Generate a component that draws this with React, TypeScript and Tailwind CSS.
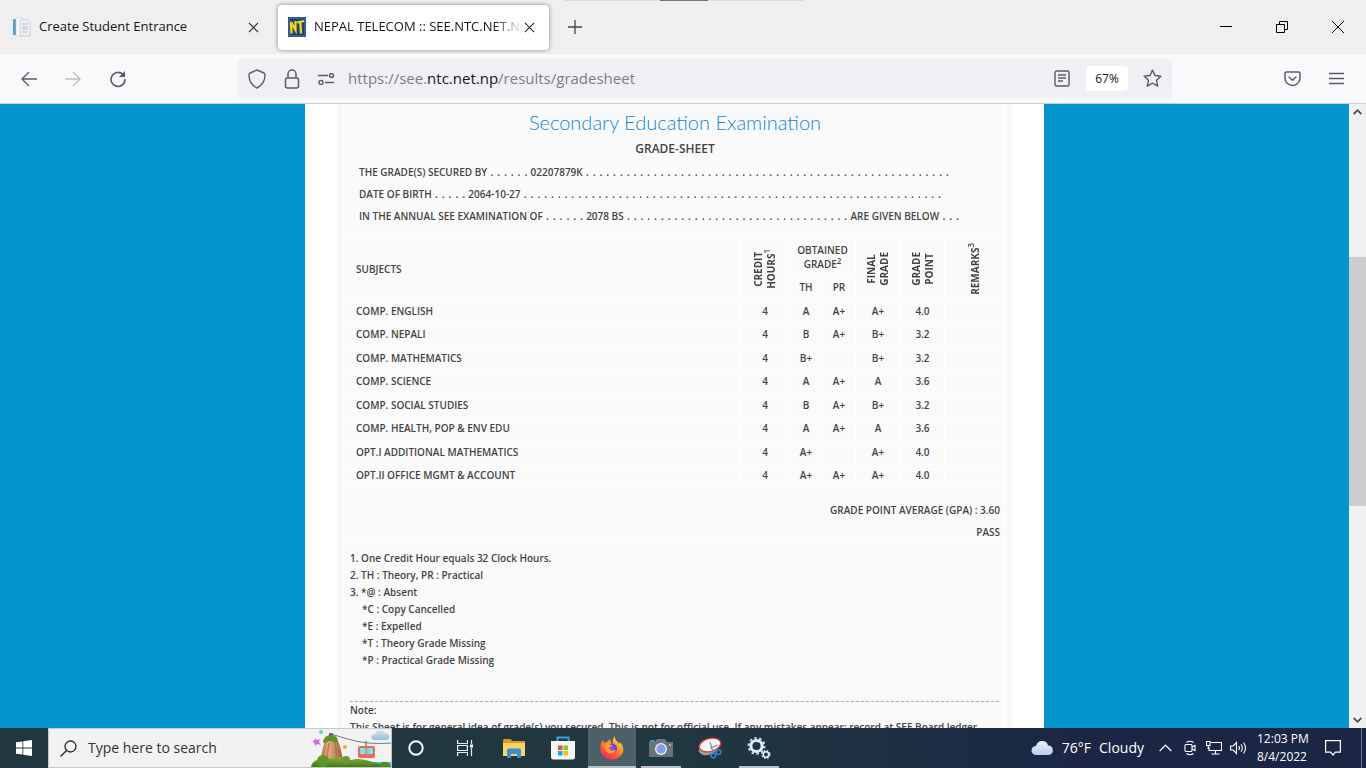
import type { ReactNode } from "react";

type Result = {
  subject: string;
  th: string;
  pr: string;
  final: string;
  point: string;
};

const results: Result[] = [
  { subject: "COMP. ENGLISH", th: "A", pr: "A+", final: "A+", point: "4.0" },
  { subject: "COMP. NEPALI", th: "B", pr: "A+", final: "B+", point: "3.2" },
  { subject: "COMP. MATHEMATICS", th: "B+", pr: "", final: "B+", point: "3.2" },
  { subject: "COMP. SCIENCE", th: "A", pr: "A+", final: "A", point: "3.6" },
  { subject: "COMP. SOCIAL STUDIES", th: "B", pr: "A+", final: "B+", point: "3.2" },
  { subject: "COMP. HEALTH, POP & ENV EDU", th: "A", pr: "A+", final: "A", point: "3.6" },
  { subject: "OPT.I ADDITIONAL MATHEMATICS", th: "A+", pr: "", final: "A+", point: "4.0" },
  { subject: "OPT.II OFFICE MGMT & ACCOUNT", th: "A+", pr: "A+", final: "A+", point: "4.0" },
];

const remarkCodes = [
  "*C : Copy Cancelled",
  "*E : Expelled",
  "*T : Theory Grade Missing",
  "*P : Practical Grade Missing",
];

function Cross({ size }: { size: number }) {
  return (
    <svg width={size} height={size} viewBox="0 0 12 12" fill="none" stroke="#222" strokeWidth="1.1">
      <path d="M1 1l10 10M11 1L1 11" />
    </svg>
  );
}

function TabBar() {
  return (
    <header className="relative flex h-[54px] shrink-0 items-center bg-[#efefef] text-[13px] text-[#15141a]">
      <div className="absolute left-[564px] top-0 h-px w-60 bg-[#dcdcdc]">
        <div className="mx-auto h-px w-12 bg-[#777]" />
      </div>
      <div className="flex h-[45px] w-[278px] items-center pl-[13px] pr-[19px]">
        <svg width="18" height="20" viewBox="0 0 18 20" className="mr-2 shrink-0">
          <path d="M0 2h3v16H0z" fill="#5b9cc9" />
          <path d="M3 1h7v18H3z" fill="#f5f8fa" stroke="#c8d3da" strokeWidth=".6" />
          <path d="M7 3h7l3 3v13H7z" fill="#eef1f2" stroke="#bcc6cb" strokeWidth=".7" />
          <path d="M9 7h6M9 10h6M9 12h6M9 15h5" stroke="#b5bfc4" />
        </svg>
        <span className="flex-1 whitespace-nowrap">Create Student Entrance</span>
        <button aria-label="Close tab">
          <Cross size={11} />
        </button>
      </div>
      <div className="flex h-[45px] w-[271px] items-center rounded-[4px] bg-white pl-[10px] pr-[14px] shadow-[0_0_4px_rgba(0,0,0,0.45)]">
        <svg width="18" height="20" viewBox="0 0 18 20" className="mr-2 shrink-0">
          <path d="M0 0h18v20H0z" fill="#1e4477" />
          <path d="M1 1h16v18H1z" fill="none" stroke="#4a78ad" />
          <path d="M3.500 16.500L3 5l4.500 8L7.500 4" fill="none" stroke="#f9d616" strokeWidth="2.300" />
          <path d="M9 5.500l7-1.500M12.300 5l.7 11.500" fill="none" stroke="#f9d616" strokeWidth="2.300" />
        </svg>
        <span className="min-w-0 flex-1 overflow-hidden whitespace-nowrap mask-r-from-85% mask-r-to-100%">
          NEPAL TELECOM :: SEE.NTC.NET.NP
        </span>
        <button aria-label="Close tab">
          <Cross size={11} />
        </button>
      </div>
      <button aria-label="New tab" className="ml-[19px]">
        <svg width="14" height="14" viewBox="0 0 14 14" stroke="#444" strokeWidth="1.3">
          <path d="M7 0v14M0 7h14" />
        </svg>
      </button>
      <div className="ml-auto flex items-center gap-11 pr-[22px]">
        <button aria-label="Minimize">
          <svg width="12" height="12" viewBox="0 0 12 12" stroke="#000">
            <path d="M0 5.500h12" />
          </svg>
        </button>
        <button aria-label="Restore">
          <svg width="12" height="12" viewBox="0 0 12 12" fill="none" stroke="#000">
            <path d="M.5 3.500h8v8h-8zM3.500 3V.5h8v8H9" />
          </svg>
        </button>
        <button aria-label="Close">
          <svg width="12" height="12" viewBox="0 0 12 12" stroke="#000">
            <path d="M0 0l12 12M12 0L0 12" />
          </svg>
        </button>
      </div>
    </header>
  );
}

function Toolbar() {
  return (
    <nav className="flex h-[50px] shrink-0 items-center border-b border-[#cccccf] bg-[#f9f9fb] text-[#5b5b66]">
      <div className="flex w-[238px] items-center gap-7 pl-[21px]">
        <button aria-label="Back">
          <svg width="16" height="16" viewBox="0 0 16 16" fill="none" stroke="currentColor" strokeWidth="1.4" strokeLinecap="round" strokeLinejoin="round">
            <path d="M7.500 1.500L1 8l6.500 6.500M1 8h14.500" />
          </svg>
        </button>
        <button aria-label="Forward" className="text-[#bdbdc2]">
          <svg width="16" height="16" viewBox="0 0 16 16" fill="none" stroke="currentColor" strokeWidth="1.4" strokeLinecap="round" strokeLinejoin="round">
            <path d="M8.500 1.500L15 8l-6.500 6.500M15 8H.5" />
          </svg>
        </button>
        <button aria-label="Reload">
          <svg width="18" height="18" viewBox="0 0 18 18" fill="none" stroke="currentColor" strokeWidth="1.600" strokeLinecap="round">
            <path d="M14 4.500A7 7 0 1 0 16 9.500" />
            <path d="M16 1v6h-6z" fill="currentColor" stroke="none" />
          </svg>
        </button>
      </div>
      <div className="flex h-[39px] flex-1 items-center rounded-[4px] bg-[#f0f0f4] px-[10px]">
        <svg width="18" height="20" viewBox="0 0 18 20" fill="none" stroke="currentColor" strokeWidth="1.400" strokeLinejoin="round">
          <path d="M9 1L2 4c-1 .4-1 1-1 2 0 6 3 10.500 8 13 5-2.500 8-7 8-13 0-1 0-1.600-1-2z" />
        </svg>
        <svg width="16" height="20" viewBox="0 0 16 20" fill="none" stroke="currentColor" strokeWidth="1.500" className="ml-[18px]">
          <rect x="1.500" y="9" width="13" height="10" rx="2" />
          <path d="M4 9V5a4 4 0 0 1 8 0v4" />
        </svg>
        <svg width="18" height="12" viewBox="0 0 18 12" fill="none" stroke="currentColor" strokeWidth="1.400" className="ml-[17px]">
          <path d="M1 2.500h10M8 9.500h9" />
          <circle cx="14.500" cy="2.500" r="2" />
          <circle cx="4" cy="9.500" r="2" />
        </svg>
        <div role="textbox" aria-label="Address" className="ml-[13px] flex-1 whitespace-nowrap text-[15px] text-[#7d7d85]">
          https://see.<span className="text-[#15141a]">ntc.net.np</span>/results/gradesheet
        </div>
        <button aria-label="Reader view">
          <svg width="16" height="18" viewBox="0 0 16 18" fill="none" stroke="currentColor" strokeWidth="1.400">
            <rect x="1" y="1" width="14" height="15" rx="1.500" />
            <path d="M4 5h8M4 8h8M4 11h5" />
          </svg>
        </button>
        <button className="ml-4 h-[25px] w-[42px] rounded-[4px] bg-white text-xs text-[#15141a]">67%</button>
        <button aria-label="Bookmark" className="ml-[15px]">
          <svg width="19" height="19" viewBox="0 0 20 20" fill="none" stroke="currentColor" strokeWidth="1.500" strokeLinejoin="round">
            <path d="M10 1.200l2.600 5.700 6.200.7-4.600 4.200 1.300 6.200L10 14.900 4.500 18l1.300-6.200L1.200 7.600l6.200-.7z" />
          </svg>
        </button>
      </div>
      <div className="flex w-[194px] items-center justify-end gap-7 pr-[22px]">
        <button aria-label="Save to Pocket">
          <svg width="17" height="16" viewBox="0 0 17 16" fill="none" stroke="currentColor" strokeWidth="1.500" strokeLinecap="round" strokeLinejoin="round">
            <path d="M2.500 1h12A1.500 1.500 0 0 1 16 2.500V7A7.500 7.500 0 0 1 1 7V2.500A1.500 1.500 0 0 1 2.500 1zM5 6l3.500 3.300L12 6" />
          </svg>
        </button>
        <button aria-label="Menu">
          <svg width="15" height="13" viewBox="0 0 15 13" stroke="currentColor" strokeWidth="1.500">
            <path d="M0 1.500h15M0 6.500h15M0 11.500h15" />
          </svg>
        </button>
      </div>
    </nav>
  );
}

function Dots({ count }: { count: number }) {
  return <span className="mx-[3px] text-[13px] font-normal leading-none">{Array(count).fill(".").join(" ")}</span>;
}

// column heading that reads from bottom to top
function Upright({ children }: { children: ReactNode }) {
  return (
    <div className="flex justify-center">
      <div className="rotate-180 text-center font-bold leading-[13px] [writing-mode:vertical-rl]">{children}</div>
    </div>
  );
}

function UprightSup({ children }: { children: ReactNode }) {
  return <sup className="static align-super text-[8px] font-semibold">{children}</sup>;
}

function GradeTable() {
  return (
    <table className="w-full table-fixed border-separate border-spacing-0 border-b border-white text-center [&_td]:border-l [&_td]:border-t [&_td]:border-white [&_td]:pb-[2px] [&_th]:border-l [&_th]:border-t [&_th]:border-white [&_th]:pb-[2px] [&_th]:font-semibold">
      <colgroup>
        <col />
        <col className="w-[49px]" />
        <col className="w-[33px]" />
        <col className="w-[33px]" />
        <col className="w-[45px]" />
        <col className="w-[44px]" />
        <col className="w-[61px]" />
      </colgroup>
      <thead>
        <tr className="h-[37px]">
          <th rowSpan={2} className="pl-3 text-left">SUBJECTS</th>
          <th rowSpan={2}>
            <Upright>CREDIT<br />HOURS<UprightSup>1</UprightSup></Upright>
          </th>
          <th colSpan={2} className="leading-[14px]">
            OBTAINED<br />GRADE<sup className="text-[8px]">2</sup>
          </th>
          <th rowSpan={2}>
            <Upright>FINAL<br />GRADE</Upright>
          </th>
          <th rowSpan={2}>
            <Upright>GRADE<br />POINT</Upright>
          </th>
          <th rowSpan={2}>
            <Upright>REMARKS<UprightSup>3</UprightSup></Upright>
          </th>
        </tr>
        <tr className="h-[23px]">
          <th>TH</th>
          <th>PR</th>
        </tr>
      </thead>
      <tbody>
        {results.map((row) => (
          <tr key={row.subject} className="h-6 even:h-[23px]">
            <td className="pl-3 text-left">{row.subject}</td>
            <td>4</td>
            <td>{row.th}</td>
            <td>{row.pr}</td>
            <td>{row.final}</td>
            <td>{row.point}</td>
            <td></td>
          </tr>
        ))}
      </tbody>
    </table>
  );
}

function GradeSheet() {
  return (
    <div className="mx-auto h-full w-[739px] bg-white px-8">
      <div className="h-full bg-[#f8f8f8] px-[6px]">
        <div className="h-full border-r border-white bg-[#fafafa] font-['Open_Sans',sans-serif] text-[10px] font-semibold leading-4 text-[#444]">
          <div className="h-[135px] border-l border-white pl-[15px]">
            <h1 className="pr-[14px] pt-[6px] text-center font-['Lato',sans-serif] text-xl font-light leading-6 text-[#0f84dd]">
              Secondary Education Examination
            </h1>
            <h2 className="pr-[14px] pt-[6px] text-center text-xs leading-[18px]">GRADE-SHEET</h2>
            <div className="mt-[3px] whitespace-nowrap leading-[22px]">
              <p>THE GRADE(S) SECURED BY<Dots count={6} />02207879K<Dots count={54} /></p>
              <p>DATE OF BIRTH<Dots count={5} />2064-10-27<Dots count={62} /></p>
              <p>IN THE ANNUAL SEE EXAMINATION OF<Dots count={6} />2078 BS<Dots count={33} />ARE GIVEN BELOW<Dots count={3} /></p>
            </div>
          </div>
          <GradeTable />
          <div className="h-14 border-b border-l border-white pr-[5px] pt-[11px] text-right leading-[22px]">
            <p>GRADE POINT AVERAGE (GPA) : 3.60</p>
            <p>PASS</p>
          </div>
          <div className="border-l border-white px-[6px] pt-[6px] leading-[17px]">
            <p>1. One Credit Hour equals 32 Clock Hours.</p>
            <p>2. TH : Theory, PR : Practical</p>
            <p>3. *@ : Absent</p>
            <ul className="pl-3">
              {remarkCodes.map((code) => (
                <li key={code}>{code}</li>
              ))}
            </ul>
            <div className="mt-8 border-t border-dashed border-[#aaa]" />
            <p>Note:</p>
            <p className="whitespace-nowrap">
              This Sheet is for general idea of grade(s) you secured. This is not for official use. If any mistakes appear; record at SEE Board ledger
            </p>
          </div>
        </div>
      </div>
    </div>
  );
}

function ScrollBar() {
  return (
    <div className="flex w-[17px] shrink-0 flex-col items-center bg-[#f0f0f0]">
      <svg width="9" height="6" viewBox="0 0 9 6" fill="none" stroke="#505050" strokeWidth="1.800" className="mt-[5px]">
        <path d="M.7 5L4.500 1.200 8.300 5" />
      </svg>
      <div className="mt-[142px] h-[249px] w-full bg-[#cdcdcd]" />
      <svg width="9" height="6" viewBox="0 0 9 6" fill="none" stroke="#505050" strokeWidth="1.800" className="mb-[5px] mt-auto">
        <path d="M.7 1L4.500 4.800 8.300 1" />
      </svg>
    </div>
  );
}

function TaskButton({ label, open, active, children }: { label: string; open?: boolean; active?: boolean; children: ReactNode }) {
  return (
    <button
      aria-label={label}
      className={`relative flex h-full w-12 items-center justify-center ${active ? "bg-[#4d6067]" : ""}`}>
      {children}
      {open && <span className={`absolute bottom-0 h-[2px] bg-[#b9c0c4] ${active ? "w-12" : "w-10"}`} />}
    </button>
  );
}

function Landscape() {
  return (
    <svg width="80" height="38" viewBox="0 0 80 38" className="shrink-0">
      <defs>
        <linearGradient id="rock" x1="0" x2="1">
          <stop offset="0" stopColor="#a9683f" />
          <stop offset=".35" stopColor="#e3ac7c" />
          <stop offset=".6" stopColor="#c98f62" />
          <stop offset="1" stopColor="#8e5535" />
        </linearGradient>
        <linearGradient id="grass" x1="0" x2="0" y1="0" y2="1">
          <stop offset="0" stopColor="#8dae35" />
          <stop offset="1" stopColor="#3f7a22" />
        </linearGradient>
        <linearGradient id="puff" x1="0" x2="0" y1="0" y2="1">
          <stop offset="0" stopColor="#d8e7f2" />
          <stop offset="1" stopColor="#98bdd6" />
        </linearGradient>
      </defs>
      <path d="M40 33h40v5H40z" fill="#3cc2cf" />
      <path d="M9 35c2-14 4-23 7-25q4-3 9 0c4 3 5 12 8 25z" fill="url(#rock)" />
      <path d="M18 14c-1 7-2 12-1 16M24 14c1 7 2 12 1 16" stroke="#a96e45" fill="none" />
      <path d="M12 13c1-5 4-7 8-7 5 0 7 3 7 7q-2 2-4 0-4-2-7 0-2 2-4 0z" fill="#5f9228" />
      <path d="M18 4h4v3h-4z" fill="#7b5c82" />
      <path d="M20 5c20 6 32 11 60 9" fill="none" stroke="#777" />
      <path d="M0 38c1-7 8-9 15-6 8-6 18-4 25-1 10-3 20 2 40 7z" fill="url(#grass)" />
      <circle cx="12" cy="32" r="6" fill="#5e9428" />
      <circle cx="35" cy="31" r="4" fill="#6b9b2c" />
      <path d="M68 38c1-6 9-8 12 0z" fill="#4e8926" />
      <path d="M55 12v7" stroke="#555" />
      <rect x="47" y="17" width="17" height="12" rx="2" fill="#ec6b56" />
      <path d="M49 19h6v6h-6zM56 19h6v6h-6z" fill="#78d7ea" />
      <path d="M51 19v6M60 19v6" stroke="#b9f2fa" />
      <path d="M64 11c-5 0-5-6 0-6 1-5 8-5 10-1 5 0 6 7 1 7z" fill="url(#puff)" />
      <circle cx="10" cy="3" r="2" fill="#62d3dd" />
      <circle cx="34" cy="18" r="2" fill="#f5a81e" />
      <path d="M3 9l3 2 3-1-1 3 2 3-4-1-2 2-1-4-2-1 3-1z" fill="#d06bdc" />
    </svg>
  );
}

function Firefox() {
  return (
    <svg width="24" height="24" viewBox="0 0 24 24">
      <defs>
        <linearGradient id="flame" x1=".8" y1="0" x2=".2" y2="1">
          <stop offset="0" stopColor="#ffe94a" />
          <stop offset=".4" stopColor="#ff9527" />
          <stop offset=".75" stopColor="#ff4a42" />
          <stop offset="1" stopColor="#e3217f" />
        </linearGradient>
        <radialGradient id="globe">
          <stop offset="0" stopColor="#9059ff" />
          <stop offset="1" stopColor="#6637c8" />
        </radialGradient>
      </defs>
      <path d="M15 0c-1 4 3 5 4 8l1-2c3 4 4 7 3 10-2 5-6 7.500-11 7.500C5 23.500.5 19 .5 12.500c0-4 .5-6 2.500-8.500l1 3 3-1 3-3c0 3 1 4 3 5-1-2 0-6 2-8z" fill="url(#flame)" />
      <circle cx="12" cy="12.500" r="5" fill="url(#globe)" />
      <path d="M5 9c3-2 5-1 8 1-2 0-3 1-4 2 1 3 4 3 7 2-1 4-7 5-10 1-1-2-2-4-1-6z" fill="#ff9a2b" />
    </svg>
  );
}

function TaskBar() {
  return (
    <footer className="flex h-10 shrink-0 items-center bg-linear-to-r from-[#20373f] from-50% to-[#1b2645] to-80% text-white">
      <button aria-label="Start" className="flex w-12 justify-center">
        <svg width="16" height="16" viewBox="0 0 16 16" fill="#fff">
          <path d="M0 2.300L6.500 1.400v6.200H0zM7.300 1.300L16 0v7.600H7.300zM0 8.400h6.500v6.200L0 13.700zM7.300 8.400H16V16l-8.700-1.300z" />
        </svg>
      </button>
      <div className="flex h-full w-[344px] items-center border border-[#c5c5c5] bg-[#f2f2f2] pl-[11px]">
        <svg width="17" height="17" viewBox="0 0 17 17" fill="none" stroke="#222" strokeWidth="1.300">
          <circle cx="10.500" cy="6.500" r="5.500" />
          <path d="M6.500 10.500L.5 16.500" />
        </svg>
        <input
          aria-label="Search"
          placeholder="Type here to search"
          className="ml-[11px] min-w-0 flex-1 bg-transparent text-sm text-[#333] outline-none placeholder:text-[#333]"
        />
        <Landscape />
      </div>
      <div className="flex h-full gap-px">
        <TaskButton label="Cortana">
          <svg width="16" height="16" viewBox="0 0 16 16" fill="none" stroke="#f5f5f5" strokeWidth="2">
            <circle cx="8" cy="8" r="6.700" />
          </svg>
        </TaskButton>
        <TaskButton label="Task View">
          <svg width="17" height="16" viewBox="0 0 17 16" fill="none" stroke="#e8ecee" strokeWidth="1.200">
            <path d="M.6 0v3.500h9.800V0M.6 16v-3.500h9.800V16M.6 5.500h9.800v5H.6zM14.500 0v4M14.500 8v8" />
            <path d="M13 4.500h3v3h-3z" fill="#fff" stroke="none" />
          </svg>
        </TaskButton>
        <TaskButton label="File Explorer">
          <svg width="22" height="19" viewBox="0 0 22 19">
            <path d="M0 1.500Q0 0 1.500 0h6L9.500 2H22v5H0z" fill="#d99a20" />
            <path d="M0 4h22v13H0z" fill="#fbd467" />
            <path d="M4 11q0-1.500 1.500-1.500h11Q18 9.500 18 11v8h-4v-4H8v4H4z" fill="#3b8fd1" />
          </svg>
        </TaskButton>
        <TaskButton label="Microsoft Store">
          <svg width="24" height="24" viewBox="0 0 24 24">
            <path d="M6.500 6V1.500h11V6" fill="none" stroke="#35a3dc" strokeWidth="2" />
            <path d="M0 5h24v16q0 2.500-2.500 2.500h-19Q0 23.500 0 21z" fill="#f5f6f7" />
            <path d="M7 9.500h4.500V14H7z" fill="#f1511b" />
            <path d="M12.500 9.500H17V14h-4.500z" fill="#80cc28" />
            <path d="M7 15h4.500v4.500H7z" fill="#00adef" />
            <path d="M12.500 15H17v4.500h-4.500z" fill="#fbbc09" />
          </svg>
        </TaskButton>
        <TaskButton label="Firefox" open active>
          <Firefox />
        </TaskButton>
        <TaskButton label="Camera" open>
          <svg width="24" height="20" viewBox="0 0 24 20">
            <defs>
              <linearGradient id="lens" x1="0" y1="0" x2="1" y2="1">
                <stop offset="0" stopColor="#b784e8" />
                <stop offset="1" stopColor="#4bb4ee" />
              </linearGradient>
            </defs>
            <path d="M1 2h5v3H1z" fill="#2b95d8" />
            <path d="M0 4h6l2-3h8l2 3h6v15H0z" fill="#6b7378" />
            <circle cx="12" cy="11" r="6" fill="#eef3f8" />
            <circle cx="12" cy="11" r="4.700" fill="url(#lens)" />
            <circle cx="21" cy="7" r="1" fill="#c7cdd0" />
          </svg>
        </TaskButton>
        <TaskButton label="Snipping Tool">
          <svg width="24" height="22" viewBox="0 0 24 22" fill="none">
            <ellipse cx="10" cy="12" rx="9.500" ry="6" fill="#9aa0a5" transform="rotate(-14 10 12)" />
            <ellipse cx="12" cy="8" rx="11" ry="6.500" fill="#f7f7f7" stroke="#d33f3f" strokeWidth="1.400" transform="rotate(-14 12 8)" />
            <path d="M12 5l3 10M20 8l-8 3" stroke="#7d8a92" strokeWidth="1.200" />
            <circle cx="15.500" cy="18.500" r="2.300" stroke="#2489cf" strokeWidth="1.600" />
            <circle cx="20.500" cy="15" r="2.300" stroke="#2489cf" strokeWidth="1.600" />
          </svg>
        </TaskButton>
        <TaskButton label="Services" open>
          <svg width="24" height="22" viewBox="0 0 24 22" fill="none">
            <circle cx="9.500" cy="9" r="7.800" stroke="#b9d3e6" strokeWidth="2.400" strokeDasharray="2.500 2.400" />
            <circle cx="9.500" cy="9" r="5.600" stroke="#dcebf5" strokeWidth="3" />
            <circle cx="19" cy="17.500" r="3.900" stroke="#b9d3e6" strokeWidth="1.500" strokeDasharray="1.700 1.400" />
            <circle cx="19" cy="17.500" r="2.700" stroke="#e6f0f7" strokeWidth="1.600" />
          </svg>
        </TaskButton>
      </div>
      <div className="ml-auto flex h-full items-center">
        <button className="flex items-center text-sm">
          <svg width="23" height="16" viewBox="0 0 23 16" className="mr-2">
            <defs>
              <linearGradient id="cloud" x1="0" y1="0" x2="0" y2="1">
                <stop offset="0" stopColor="#e9f2ff" />
                <stop offset="1" stopColor="#b8cdf0" />
              </linearGradient>
            </defs>
            <path d="M5 15a4.500 4.500 0 0 1 0-9C6 2 9 .5 12 1c3 .3 4.500 2 5 4.500a4.800 4.800 0 0 1 1 9.500z" fill="url(#cloud)" />
          </svg>
          76°F<span className="ml-2">Cloudy</span>
        </button>
        <button aria-label="Show hidden icons" className="ml-[15px]">
          <svg width="13" height="8" viewBox="0 0 13 8" fill="none" stroke="#fff" strokeWidth="1.200">
            <path d="M.7 7l5.800-5.800L12.300 7" />
          </svg>
        </button>
        <svg width="12" height="16" viewBox="0 0 12 16" fill="none" stroke="#fff" strokeWidth="1.100" className="ml-3">
          <path d="M2.500 2.500q3.500-2.500 7 0M2.500 13.500q3.500 2.500 7 0" />
          <rect x="1" y="4.500" width="7" height="7" rx="1" />
          <path d="M8 7l3-1.500v5L8 9" />
        </svg>
        <svg width="16" height="14" viewBox="0 0 16 14" fill="none" stroke="#fff" strokeWidth="1.100" className="ml-[10px]">
          <path d="M5 1.500h10.500v8H3V6M9.500 9.500v3.500M5.500 13h8M.5.500H4v4H.5zM2.200 4.500V8" />
        </svg>
        <svg width="17" height="14" viewBox="0 0 17 14" fill="none" stroke="#fff" strokeWidth="1.100" className="ml-2">
          <path d="M.6 5h2.600L6.500 1.500v11L3.200 9H.6zM8.700 5q1.500 2 0 4M11 3.200q2.600 3.800 0 7.600M13.500 1.500q4 5.500 0 11" />
        </svg>
        <div className="ml-[10px] w-12 whitespace-nowrap text-center text-xs leading-[18px]">
          <p>12:03 PM</p>
          <p>8/4/2022</p>
        </div>
        <button aria-label="Notifications" className="ml-5">
          <svg width="16" height="16" viewBox="0 0 16 16" fill="none" stroke="#fff" strokeWidth="1.200">
            <path d="M.6.600h14.800v11.500h-5L8 15l-2.400-2.900h-5z" />
          </svg>
        </button>
        <div className="ml-5 mr-1 h-full w-px bg-[#6b7489]" />
      </div>
    </footer>
  );
}

export default function App() {
  return (
    <div className="flex h-screen flex-col overflow-hidden font-['Open_Sans',sans-serif]">
      <TabBar />
      <Toolbar />
      <main className="flex min-h-0 flex-1 bg-[#0395cd]">
        <div className="min-w-0 flex-1 overflow-hidden">
          <GradeSheet />
        </div>
        <ScrollBar />
      </main>
      <TaskBar />
    </div>
  );
}
